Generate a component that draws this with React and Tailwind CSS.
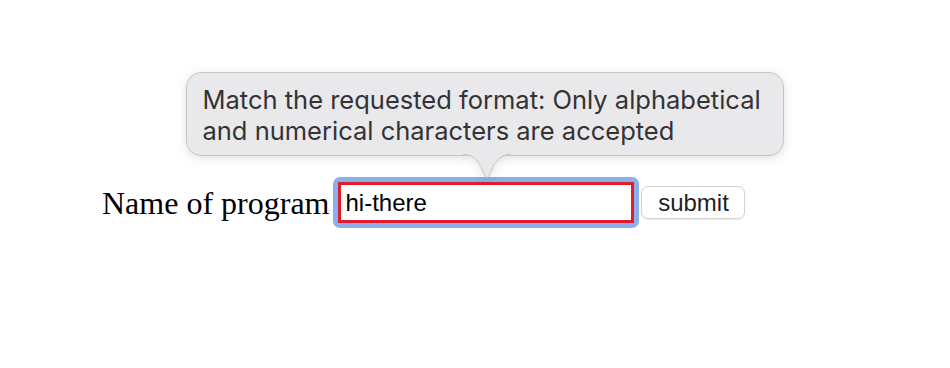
import React from "react";

export default function App() {
  return (
    <div className="min-h-[368px] w-[950px] bg-white pt-[177px] pl-[102px]">
      <form className="flex items-center" onSubmit={(e) => e.preventDefault()}>
        <label
          className="text-[32px] leading-[36px] text-black mt-[1px]"
          style={{ fontFamily: '"Liberation Serif", "Times New Roman", serif' }}
        >
          Name of program
        </label>
        <div className="relative ml-[4px] rounded-[7px] bg-[#8aafea] p-[5px]">
          <div className="flex h-[41px] w-[296px] items-center border-[3px] border-[#e11d2b] bg-white pl-[4px]">
            <span
              className="text-[24px] leading-none text-black"
              style={{ fontFamily: '"Liberation Sans", Arial, sans-serif' }}
            >
              hi-there
            </span>
          </div>
          <div className="absolute left-[-147px] top-[-105px] drop-shadow-[0_2px_5px_rgba(0,0,0,0.13)]">
            <div className="relative h-[84px] w-[598px] rounded-[15px] border border-[#c5c5c7] bg-[#e9e9eb] px-[15px] pt-[11px]">
              <p
                className="text-[25.5px] leading-[31px] text-[#333336]"
                style={{ fontFamily: 'Inter, "Liberation Sans", sans-serif' }}
              >
                Match the requested format: Only alphabetical
                <br />
                and numerical characters are accepted
              </p>
              <svg
                className="absolute top-full left-[276px] -mt-px overflow-visible"
                width="48"
                height="25"
                viewBox="0 0 48 25"
              >
                <path
                  d="M0 0 L48 0 C40 0 35 3 30 12 L26 21.5 Q24 25 22 21.5 L18 12 C13 3 8 0 0 0 Z"
                  fill="#e9e9eb"
                />
                <path
                  d="M0 0.5 C8 0.5 13 3.5 18 12.5 L22 21.8 Q24 25 26 21.8 L30 12.5 C35 3.5 40 0.5 48 0.5"
                  fill="none"
                  stroke="#c5c5c7"
                  strokeWidth="1"
                />
              </svg>
            </div>
          </div>
        </div>
        <button
          type="submit"
          className="ml-[2px] flex h-[33px] w-[104px] items-center justify-center rounded-[7px] border border-[#d2d2d4] bg-white text-[24px] leading-none text-[#1f1f1f] shadow-[0_1px_1px_rgba(0,0,0,0.08)]"
          style={{ fontFamily: '"Liberation Sans", Arial, sans-serif' }}
        >
          submit
        </button>
      </form>
    </div>
  );
}
